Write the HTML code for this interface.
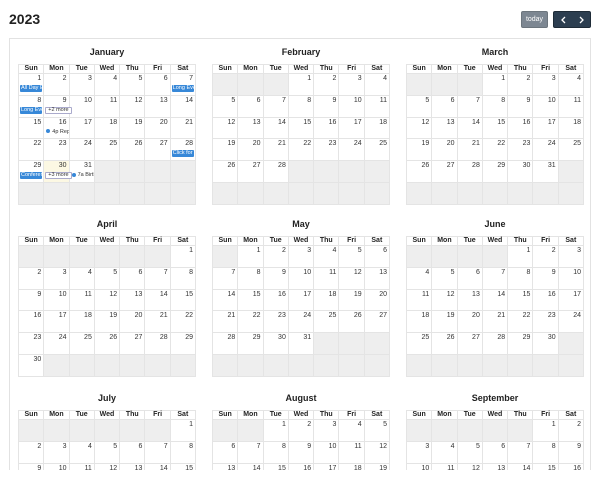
<!DOCTYPE html>
<html><head><meta charset="utf-8">
<style>
*{box-sizing:border-box;margin:0;padding:0}
body{width:600px;height:481px;background:#fff;font-family:"Liberation Sans",Arial,sans-serif;position:relative;overflow:hidden;color:#222}
h1{position:absolute;left:9px;top:11px;font-size:14px;font-weight:bold}
.btn{position:absolute;top:11px;height:17px;border-radius:2px;color:#fff;font-size:7px;display:flex;align-items:center;justify-content:center}
#today{left:521px;width:27px;background:#7d8792;border:1px solid #6c757d}
#nav{left:553px;width:38px;background:#2c3e50;border:1px solid #1e2b37;justify-content:space-around}
#wrap{position:absolute;left:9px;top:38px;width:582px;height:432px;border:1px solid #e2e2e2;border-bottom:none;overflow:hidden}
.month{position:absolute;width:178px}
.title{text-align:center;font-size:9px;font-weight:bold;height:24px;line-height:24px}
table{border-collapse:collapse;width:178px;table-layout:fixed}
th{font-size:7px;font-weight:bold;height:9px;line-height:8px;border:1px solid #e4e4e4;color:#222;padding:0}
td{height:21.8px;border:1px solid #e4e4e4;vertical-align:top;font-size:7px;line-height:9px;text-align:right;padding:0 2px 0 0;position:relative;color:#333}
td.e{background:#eee}
td.t{background:#fcf8e3}
.ev{position:absolute;left:1px;right:1px;top:11px;height:7px;background:#3788d8;color:#fff;font-size:5.5px;line-height:7px;text-align:left;padding-left:1px;overflow:hidden;white-space:nowrap;border-radius:1px}
.more{position:absolute;left:1px;top:11px;height:7px;border:1px solid #aac;background:#fff;font-size:5.5px;line-height:5px;padding:0 2px;text-align:left;border-radius:1px;color:#333;white-space:nowrap}
.dot{position:absolute;left:2px;top:11px;font-size:5.5px;line-height:7px;text-align:left;white-space:nowrap;overflow:hidden;right:0}
.dot:before{content:"";display:inline-block;width:4px;height:4px;border-radius:2px;background:#3788d8;margin-right:2px;vertical-align:middle}
</style></head><body>
<h1>2023</h1>
<div class="btn" id="today">today</div>
<div class="btn" id="nav"><svg width="7" height="8" viewBox="0 0 7 8"><path d="M5 1L2 4L5 7" stroke="#fff" stroke-width="1.3" fill="none"/></svg><svg width="7" height="8" viewBox="0 0 7 8"><path d="M2 1L5 4L2 7" stroke="#fff" stroke-width="1.3" fill="none"/></svg></div>
<div id="wrap"></div>
<script>
var names=["January","February","March","April","May","June","July","August","September"];
var starts=[0,3,3,6,1,4,6,2,5],lens=[31,28,31,30,31,30,31,31,30];
var ev={"0-1":'<div class="ev">All Day Event</div>',"0-7":'<div class="ev">Long Event</div>',"0-8":'<div class="ev">Long Event</div>',"0-9":'<div class="more">+2 more</div>',"0-16":'<div class="dot">4p Repeating</div>',"0-28":'<div class="ev">Click for Google</div>',"0-29":'<div class="ev">Conference</div>',"0-30":'<div class="more">+3 more</div>',"0-31":'<div class="dot">7a Birthday</div>'};
var lefts=[8,202,396],tops=[1,173,347],h="";
var days=["Sun","Mon","Tue","Wed","Thu","Fri","Sat"];
for(var m=0;m<9;m++){
 var s='<div class="month" style="left:'+lefts[m%3]+'px;top:'+tops[Math.floor(m/3)]+'px"><div class="title">'+names[m]+'</div><table><tr>';
 days.forEach(function(d){s+='<th>'+d+'</th>'});s+='</tr>';
 for(var r=0;r<6;r++){s+='<tr>';for(var c=0;c<7;c++){var d=r*7+c-starts[m]+1;
  if(d<1||d>lens[m])s+='<td class="e"></td>';
  else s+='<td'+(m==0&&d==30?' class="t"':'')+'>'+d+(ev[m+"-"+d]||"")+'</td>';}
  s+='</tr>';}
 h+=s+'</table></div>';}
document.getElementById("wrap").innerHTML=h;
</script>
</body></html>
